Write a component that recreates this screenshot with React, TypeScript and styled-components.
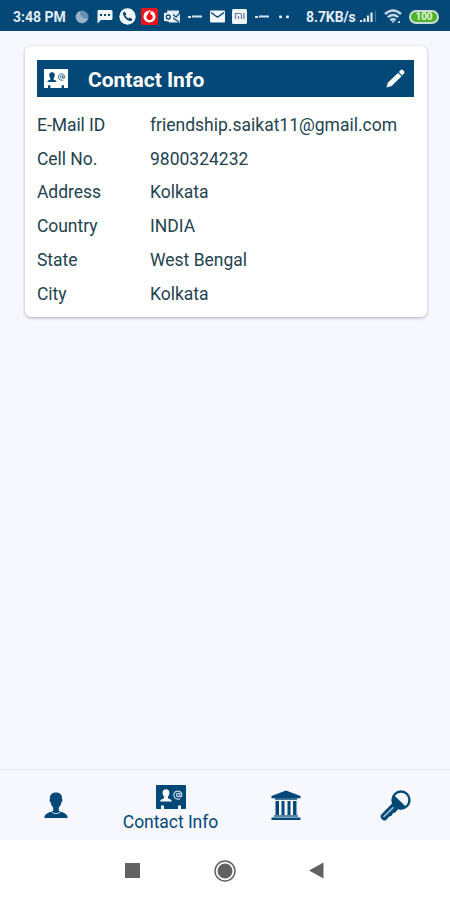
import React from "react";
import styled, { createGlobalStyle } from "styled-components";

const NAVY = "#034877";

const GlobalStyle = createGlobalStyle`
  * { box-sizing: border-box; }
  body { margin: 0; background: #f7f8fe; }
  svg { display: block; flex: none; }
`;

const Screen = styled.div`
  display: flex;
  flex-direction: column;
  width: 450px;
  height: 900px;
  overflow: hidden;
  background: #f7f8fe;
  color: #24434f;
  font-family: Roboto, sans-serif;
`;

const StatusBar = styled.header`
  display: flex;
  align-items: center;
  height: 31px;
  padding: 2px 11px 0 13px;
  background: ${NAVY};
  color: #e4edf4;
`;

const StatusText = styled.span<{ $width: number; $spacing: number }>`
  width: ${(p) => p.$width}px;
  font-size: 14px;
  line-height: 16px;
  font-weight: 700;
  letter-spacing: ${(p) => p.$spacing}px;
  white-space: nowrap;
`;

const Notifications = styled.div`
  display: flex;
  width: 235px;
`;

const Notification = styled.span`
  display: flex;
  width: 22.5px;
  height: 18px;
  align-items: center;
  justify-content: center;
`;

const Indicators = styled.div`
  display: flex;
  align-items: center;
  gap: 7px;
`;

const Battery = styled.span`
  width: 30px;
  height: 14px;
  border: 2px solid #c9dcd8;
  border-radius: 7px;
  background: #4fb52a;
  color: #e4f7dc;
  font-size: 10px;
  font-weight: 700;
  line-height: 10px;
  text-align: center;
`;

const Content = styled.main`
  flex: 1;
  padding: 15px 23px 0 25px;
`;

const Card = styled.section`
  height: 271px;
  padding: 14px 13px 0 12px;
  border-radius: 6px;
  background: #fff;
  box-shadow: 0 1px 3px rgba(30, 30, 50, 0.34);
`;

const CardHeader = styled.div`
  display: flex;
  align-items: center;
  height: 37px;
  padding: 0 9px 0 7px;
  background: ${NAVY};
  color: #fff;
`;

const CardTitle = styled.h1`
  flex: 1;
  margin: 2px 0 0 20px;
  font-size: 21px;
  line-height: 24px;
  font-weight: 700;
  letter-spacing: 0;
`;

const Details = styled.dl`
  display: grid;
  grid-template-columns: 113px 1fr;
  grid-auto-rows: 33.75px;
  align-items: center;
  margin: 11px 0 0;
  font-size: 17.5px;
  line-height: 22px;
  white-space: nowrap;
`;

const Label = styled.dt`
  letter-spacing: -0.05px;
`;

const Value = styled.dd`
  margin: 0;
  letter-spacing: 0;
`;

const TabBar = styled.nav`
  display: grid;
  grid-template-columns: 112px 117px 113px 106px;
  height: 71px;
  border-top: 1px solid #e3e5ec;
  background: #f7f8fe;
  color: ${NAVY};
`;

const Tab = styled.div`
  display: flex;
  flex-direction: column;
  align-items: center;
  justify-content: center;
  gap: 2px;
`;

const ActiveTab = styled(Tab)`
  justify-content: flex-start;
  padding-top: 15px;
`;

const TabLabel = styled.span`
  font-size: 17.5px;
  line-height: 22px;
  letter-spacing: -0.05px;
`;

const SystemBar = styled.footer`
  display: flex;
  align-items: center;
  gap: 73.5px;
  height: 60px;
  padding: 1px 0 0 125px;
  background: #fff;
  color: #626262;
`;

function ContactIcon({ width, height, ink }: { width: number; height: number; ink: string }) {
  return (
    <svg width={width} height={height} viewBox="0 0 30 24" preserveAspectRatio="none">
      <path d="M1 0h28q1 0 1 1v22q0 1-1 1h-4v-3.5h-3V24H8v-3.5H5V24H1q-1 0-1-1V1q0-1 1-1Z" fill="currentColor" />
      <path d="M10 4.2c2.300 0 3.600 1.500 3.400 4-.1 1.800-.8 2.500-1.400 3.400v1.600c1 .9 3.600.8 3.900 3.300H4.100c.3-2.500 2.900-2.400 3.900-3.300v-1.600c-.6-.9-1.300-1.600-1.400-3.400-.2-2.500 1.100-4 3.400-4Z" fill={ink} />
      <g opacity=".8" fill="none" stroke={ink} strokeWidth="1.200">
        <circle cx="22" cy="10" r="1.600" />
        <path d="M23.800 8.300v2.800q.3 1.200 1.500.5c1.400-2-.1-5.500-3.300-5.500-5.300 0-5.600 8 0 8h2" />
      </g>
    </svg>
  );
}

function PencilIcon() {
  return (
    <svg width="19" height="19" viewBox="0 0 19 19" fill="currentColor">
      <path d="m.4 18.600 1.600-5.100L12 3.900l3.500 3.400-9.800 9.800Z" />
      <path d="M12.800 3.100 14.700 1q1.100-1 2.200.1l1.200 1.200q1 1.100-.1 2.100l-1.800 2Z" />
    </svg>
  );
}

function MoonIcon() {
  return (
    <svg width="14" height="14" viewBox="0 0 14 14">
      <circle cx="7" cy="7" r="6.500" fill="#6790ae" />
      <path d="M5 1.300A6 6 0 1 0 13 8 6 6 0 0 1 5 1.300Z" fill="#99b3c8" />
    </svg>
  );
}

function ChatIcon() {
  return (
    <svg width="16" height="14" viewBox="0 0 16 14">
      <path d="M1.500 0H14q1.500 0 1.500 1.500v7Q15.500 10 14 10H4L.500 13.500v-12Q.500 0 1.500 0Z" fill="#f2f6fa" />
      <path d="M3 5h2M7 5h2M11 5h2" stroke={NAVY} strokeWidth="1.800" />
    </svg>
  );
}

function PhoneIcon() {
  return (
    <svg width="17" height="17" viewBox="0 0 17 17">
      <circle cx="8.500" cy="8.500" r="8.200" fill="#f5f8fa" />
      <path d="m4.100 4.600 1.500-1.200 1.900 2.800-1.200 1.300q1.100 2 3.200 3.100l1.300-1.100 2.700 1.700-1.100 1.700c-3.500 1.200-9.100-4.300-8.300-8.300Z" fill={NAVY} />
    </svg>
  );
}

function OperatorIcon() {
  return (
    <svg width="17" height="17" viewBox="0 0 17 17">
      <rect width="17" height="17" rx="2" fill="#e8141e" />
      <circle cx="8.500" cy="8.500" r="6" fill="#fff" />
      <path d="M10.800 3.200C8 3.300 7 5 7 6.300c-3 2.200-1.400 5.900 1.500 5.900 3.700 0 4.800-5.100.6-6.100 0-1 .6-1.900 1.700-2.900Z" fill="#e8141e" />
    </svg>
  );
}

function OutlookIcon() {
  return (
    <svg width="17" height="14" viewBox="0 0 17 14">
      <path d="M3 .500h12v3h1v9H5Z" fill="#dce8f1" />
      <path d="m8 4 4 3 4-4M9 8l6 4" fill="none" stroke={NAVY} strokeWidth="1.100" />
      <path d="M0 3 9 2v10l-9-1Z" fill="#f4f7fa" />
      <circle cx="4.300" cy="7" r="2" fill="none" stroke={NAVY} strokeWidth="1.300" />
    </svg>
  );
}

function DashIcon() {
  return (
    <svg width="16" height="5" viewBox="0 0 16 5">
      <path d="M1 3h3M5 2.500h10" stroke="#dce8ef" strokeWidth="2" />
      <path d="M8 1.500v1M11.500 1.500v1" stroke="#89a9bf" />
    </svg>
  );
}

function MailIcon() {
  return (
    <svg width="15" height="13" viewBox="0 0 15 13">
      <rect y=".5" width="15" height="12" rx="1" fill="#f2f5f9" />
      <path d="m1 2.500 5.400 4q1.100.7 2.200 0l5.400-4" fill="none" stroke={NAVY} strokeWidth="1.500" />
    </svg>
  );
}

function MiIcon() {
  return (
    <svg width="15" height="15" viewBox="0 0 15 15">
      <rect width="15" height="15" rx="1.500" fill="#edf3f7" />
      <path d="M3.500 10V4.500H8q1.500 0 1.500 1.500v4M6.500 7v3M12 4v6" fill="none" stroke="#6b8197" strokeWidth="1.200" />
    </svg>
  );
}

function MoreIcon() {
  return (
    <svg width="11" height="4" viewBox="0 0 11 4" fill="#e5edf3">
      <rect x="0" y=".5" width="3" height="2.800" rx="1" />
      <rect x="7" y=".5" width="3" height="2.800" rx="1" />
    </svg>
  );
}

function SignalIcon() {
  return (
    <svg width="18" height="13" viewBox="0 0 18 13">
      <path d="M2 12v-2M5.500 12V8.500M9 12V5.500M12.500 12V2.500" stroke="#dce8ef" strokeWidth="2.200" />
      <path d="M16.500 12V.500" stroke="#477898" strokeWidth="1.200" />
    </svg>
  );
}

function WifiIcon() {
  return (
    <svg width="18" height="15" viewBox="0 0 18 15" fill="none" stroke="#c6d8e5" strokeWidth="2.400">
      <path d="M1 5q8-7 16 0M3.800 8.200q5.200-4.300 10.400 0M6.400 11.200q2.600-2 5.200 0" />
      <path d="m7.500 12 1.500 2.300L10.500 12Z" fill="#c6d8e5" stroke="none" />
      <path d="m13 14 3-2.500V14Z" fill="#c6d8e5" stroke="none" />
    </svg>
  );
}

function PersonIcon() {
  return (
    <svg width="24" height="27" viewBox="0 0 24 27">
      <path d="M12 .5c4.300 0 6.400 2.500 6 6.500.7.400.5 2.800-.7 3.500-.4 2.400-1.300 3.900-2.500 5v3c1.300 2 8.500 1.300 8.900 7.500H.3c.4-6.200 7.600-5.500 8.900-7.500v-3c-1.200-1.100-2.100-2.600-2.500-5C5.500 9.800 5.300 7.400 6 7 5.600 3 7.700.500 12 .500Z" fill="currentColor" />
      <path d="M7.500 19.800q4.500 3.800 9 0" fill="none" stroke="#dceaf5" strokeWidth=".9" />
    </svg>
  );
}

function BankIcon() {
  return (
    <svg width="30" height="30" viewBox="0 0 30 30" fill="currentColor">
      <path d="M15 .5 29.500 6v2.200H.500V6Z" />
      <path d="M4 8h22v2H4Z" opacity=".75" />
      <path d="M4.500 11H8v14H4.500ZM10.500 11h3v14h-3ZM16.500 11h3v14h-3ZM22 11h3.500v14H22Z" />
      <path d="M3 25h24v2H3Z" opacity=".65" />
      <path d="M.500 27.500h29V30H.500Z" />
    </svg>
  );
}

function KeyIcon() {
  return (
    <svg width="31" height="31" viewBox="0 0 31 31">
      <path d="M12 13.500 1.300 24.500Q0 26 .700 27.500L2 29.500q1.500 1.500 4 .7l3.200-3.700 2-.5 2-3 2.200-.4 3.500-4.600Z" fill="currentColor" />
      <path d="m3.500 27 10-9.800" stroke="#b9cfe0" strokeWidth="1.300" />
      <circle cx="21" cy="10" r="8.500" fill="#f7f8fe" stroke="currentColor" strokeWidth="2.400" />
      <path d="m13.800 5 12.700 12.300c-3.800 3.300-9.400 2.700-12.200-.8-2.800-3.600-2.700-8.300-.5-11.500Z" fill="currentColor" />
    </svg>
  );
}

const notifications = [MoonIcon, ChatIcon, PhoneIcon, OperatorIcon, OutlookIcon, DashIcon, MailIcon, MiIcon, DashIcon, MoreIcon];

const details = [
  ["E-Mail ID", "friendship.saikat11@gmail.com"],
  ["Cell No.", "9800324232"],
  ["Address", "Kolkata"],
  ["Country", "INDIA"],
  ["State", "West Bengal"],
  ["City", "Kolkata"],
];

export default function App() {
  return (
    <Screen>
      <GlobalStyle />
      <StatusBar>
        <StatusText $width={58} $spacing={0}>3:48 PM</StatusText>
        <Notifications>
          {notifications.map((Icon, i) => (
            <Notification key={i}><Icon /></Notification>
          ))}
        </Notifications>
        <StatusText $width={53} $spacing={-0.1}>8.7KB/s</StatusText>
        <Indicators>
          <SignalIcon />
          <WifiIcon />
          <Battery>100</Battery>
        </Indicators>
      </StatusBar>
      <Content>
        <Card>
          <CardHeader>
            <ContactIcon width={24} height={19} ink={NAVY} />
            <CardTitle>Contact Info</CardTitle>
            <PencilIcon />
          </CardHeader>
          <Details>
            {details.map(([label, value]) => (
              <React.Fragment key={label}>
                <Label>{label}</Label>
                <Value>{value}</Value>
              </React.Fragment>
            ))}
          </Details>
        </Card>
      </Content>
      <TabBar>
        <Tab><PersonIcon /></Tab>
        <ActiveTab>
          <ContactIcon width={30} height={24} ink="#f7f8fe" />
          <TabLabel>Contact Info</TabLabel>
        </ActiveTab>
        <Tab><BankIcon /></Tab>
        <Tab><KeyIcon /></Tab>
      </TabBar>
      <SystemBar>
        <svg width="15" height="15" viewBox="0 0 15 15"><rect width="15" height="15" fill="currentColor" /></svg>
        <svg width="22" height="22" viewBox="0 0 22 22">
          <circle cx="11" cy="11" r="10" fill="none" stroke="currentColor" strokeWidth="1.500" />
          <circle cx="11" cy="11" r="7.500" fill="currentColor" />
        </svg>
        <svg width="15" height="17" viewBox="0 0 15 17"><path d="M0 8.500 14.500.500v16Z" fill="currentColor" /></svg>
      </SystemBar>
    </Screen>
  );
}
